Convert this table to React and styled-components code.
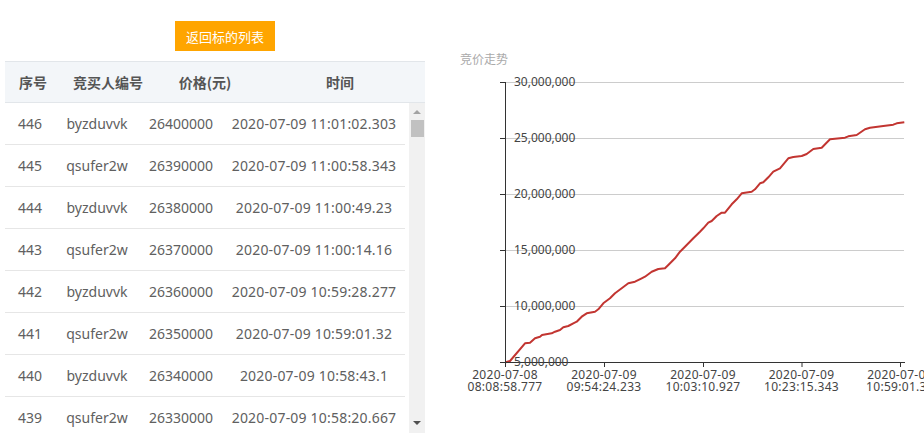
import React from 'react';
import styled, { createGlobalStyle } from 'styled-components';

const GlobalStyle = createGlobalStyle`
    html, body {
        margin: 0;
        padding: 0;
        background: #fff;
        overflow: hidden;
    }
    body {
        font-family: "Noto Sans", "Noto Sans CJK SC", sans-serif;
    }
`;

const PageBox = styled.div`
    display: flex;
    flex-direction: row;
    width: 924px;
    height: 442px;
    overflow: hidden;
`;

const LeftPanel = styled.div`
    display: flex;
    flex-direction: column;
    align-items: center;
    width: 450px;
    flex-shrink: 0;
    padding-top: 21px;
    box-sizing: border-box;
`;

const BackButton = styled.button`
    width: 100px;
    height: 30px;
    border: none;
    background: #ffa500;
    color: #fff;
    font-family: "Noto Sans CJK SC", sans-serif;
    font-size: 13px;
    padding: 0;
    cursor: pointer;
`;

const TableBox = styled.div`
    align-self: flex-start;
    margin: 10px 0 0 5px;
    width: 420px;
    display: flex;
    flex-direction: column;
`;

const HeadRow = styled.div`
    display: grid;
    grid-template-columns: 56px 94px 100px 170px;
    height: 42px;
    align-items: center;
    background: #f3f6f9;
    border-top: 1px solid #e2e6ea;
    border-bottom: 1px solid #e2e6ea;
    box-sizing: border-box;
`;

const HeadCell = styled.div`
    text-align: center;
    font-family: "Noto Sans CJK SC", sans-serif;
    font-size: 14px;
    font-weight: 700;
    color: #555;
`;

const BodyWrap = styled.div`
    display: flex;
    flex-direction: row;
    justify-content: space-between;
    height: 330px;
    overflow: hidden;
`;

const Rows = styled.div`
    width: 400px;
    display: flex;
    flex-direction: column;
`;

const Row = styled.div`
    display: grid;
    grid-template-columns: 50px 84px 84px 182px;
    flex-shrink: 0;
    height: 42px;
    align-items: center;
    border-bottom: 1px solid #e6e6e6;
    box-sizing: border-box;
`;

const Cell = styled.div`
    text-align: center;
    font-size: 14px;
    color: #606060;
    white-space: nowrap;
    letter-spacing: ${p => (p.$wide ? '0.2px' : '0')};
`;

const ScrollTrack = styled.div`
    width: 16px;
    background: #f1f1f1;
    display: flex;
    flex-direction: column;
    align-items: center;
`;

const Arrow = styled.div`
    width: 0;
    height: 0;
    margin: ${p => (p.$down ? 'auto 0 8px' : '7px 0 0')};
    border-left: 4px solid transparent;
    border-right: 4px solid transparent;
    border-bottom: ${p => (p.$down ? 'none' : '4px solid #a3a3a3')};
    border-top: ${p => (p.$down ? '4px solid #505050' : 'none')};
`;

const Thumb = styled.div`
    width: 13px;
    height: 17px;
    margin-top: 6px;
    background: #c1c1c1;
`;

const ChartPanel = styled.div`
    flex: 1;
    margin-left: -10px;
    height: 442px;
`;

const bids = [
    ['446', 'byzduvvk', '26400000', '2020-07-09 11:01:02.303'],
    ['445', 'qsufer2w', '26390000', '2020-07-09 11:00:58.343'],
    ['444', 'byzduvvk', '26380000', '2020-07-09 11:00:49.23'],
    ['443', 'qsufer2w', '26370000', '2020-07-09 11:00:14.16'],
    ['442', 'byzduvvk', '26360000', '2020-07-09 10:59:28.277'],
    ['441', 'qsufer2w', '26350000', '2020-07-09 10:59:01.32'],
    ['440', 'byzduvvk', '26340000', '2020-07-09 10:58:43.1'],
    ['439', 'qsufer2w', '26330000', '2020-07-09 10:58:20.667'],
];

// price line traced from the chart, page coordinates
const trend = [
    [505.7, 362.3], [510, 361], [525, 343.3], [530, 342.7], [535, 338.3], [540, 336.7],
    [542, 335], [551.7, 333.3], [555, 331.7], [560, 330], [563.3, 327.3], [568.3, 326],
    [573.3, 323.3], [576.7, 321.7], [581.7, 316.7], [586.7, 313.3], [595, 311.7], [598.3, 309.3],
    [603.3, 303.3], [610, 298.3], [615, 293.3], [621.7, 288.3], [628.3, 283.3], [635, 281.7],
    [641.7, 278.3], [645, 276.7], [651.7, 271.7], [658.3, 269], [665, 268.3], [668.3, 265],
    [675, 258.3], [680, 251.7], [686.7, 245], [693.3, 238.3], [700, 231.7], [703.3, 228.3],
    [708.3, 222.7], [711.7, 221], [716.7, 216], [721.7, 212.7], [725, 212.7], [731.7, 204.3],
    [736.7, 199.3], [741.7, 193.3], [751.7, 191.7], [755, 189.3], [760, 183.3], [763.3, 182.3],
    [768.3, 177.3], [773.3, 171.7], [780, 168.3], [788.3, 158.3], [793.3, 157], [801.7, 156],
    [806.7, 154], [813.3, 149], [821.7, 147.7], [830, 139.3], [845, 137.7], [848.3, 136.3],
    [856.7, 135], [865, 129.3], [870, 127.7], [883.3, 126], [893.3, 124.7], [896.7, 123.3],
    [904.3, 122.3],
];

const yTicks = [
    [82, '30,000,000'],
    [138, '25,000,000'],
    [194, '20,000,000'],
    [250, '15,000,000'],
    [306, '10,000,000'],
    [362, '5,000,000'],
];

const xTicks = [
    [505, '2020-07-08', '08:08:58.777'],
    [604, '2020-07-09', '09:54:24.233'],
    [703, '2020-07-09', '10:03:10.927'],
    [801.5, '2020-07-09', '10:23:15.343'],
    [900, '2020-07-09', '10:59:01.32'],
];

const TrendChart = () => (
    <svg width="484" height="442" viewBox="440 0 484 442" fontFamily='"Noto Sans", "Noto Sans CJK SC", sans-serif'>
        <text x="460" y="64" fontSize="12" fill="#aaa" fontFamily='"Noto Sans CJK SC", sans-serif'>竞价走势</text>
        {yTicks.slice(0, 5).map(([y]) => (
            <line key={y} x1="505" x2="904" y1={y + 0.5} y2={y + 0.5} stroke="#ccc" strokeWidth="1" />
        ))}
        <polyline
            points={trend.map(p => p.join(',')).join(' ')}
            fill="none"
            stroke="#c23531"
            strokeWidth="2"
            strokeLinejoin="round"
        />
        <line x1="505.5" x2="505.5" y1="82" y2="362.5" stroke="#333" />
        <line x1="500" x2="905" y1="362.5" y2="362.5" stroke="#333" />
        {yTicks.map(([y, label]) => (
            <g key={label}>
                <line x1="500" x2="505" y1={y + 0.5} y2={y + 0.5} stroke="#333" />
                <text x="514" y={y + 4} fontSize="12" fill="#444">{label}</text>
            </g>
        ))}
        {xTicks.map(([x, day, time]) => (
            <g key={time}>
                <line x1={x + 0.5} x2={x + 0.5} y1="362" y2="367" stroke="#333" />
                <text x={x} y="379" fontSize="12" fill="#444" textAnchor="middle" letterSpacing="0.3">{day}</text>
                <text x={x} y="391" fontSize="12" fill="#444" textAnchor="middle" letterSpacing="0.3">{time}</text>
            </g>
        ))}
    </svg>
);

const App = () => {
    return (
    <PageBox>
        <GlobalStyle />
        <LeftPanel>
            <BackButton>返回标的列表</BackButton>
            <TableBox>
                <HeadRow>
                    <HeadCell>序号</HeadCell>
                    <HeadCell>竞买人编号</HeadCell>
                    <HeadCell>价格(元)</HeadCell>
                    <HeadCell>时间</HeadCell>
                </HeadRow>
                <BodyWrap>
                    <Rows>
                        {bids.map(([no, bidder, price, time]) => (
                            <Row key={no}>
                                <Cell>{no}</Cell>
                                <Cell>{bidder}</Cell>
                                <Cell>{price}</Cell>
                                <Cell $wide>{time}</Cell>
                            </Row>
                        ))}
                    </Rows>
                    <ScrollTrack>
                        <Arrow />
                        <Thumb />
                        <Arrow $down />
                    </ScrollTrack>
                </BodyWrap>
            </TableBox>
        </LeftPanel>
        <ChartPanel>
            <TrendChart />
        </ChartPanel>
    </PageBox>
    );
};

export default App;
